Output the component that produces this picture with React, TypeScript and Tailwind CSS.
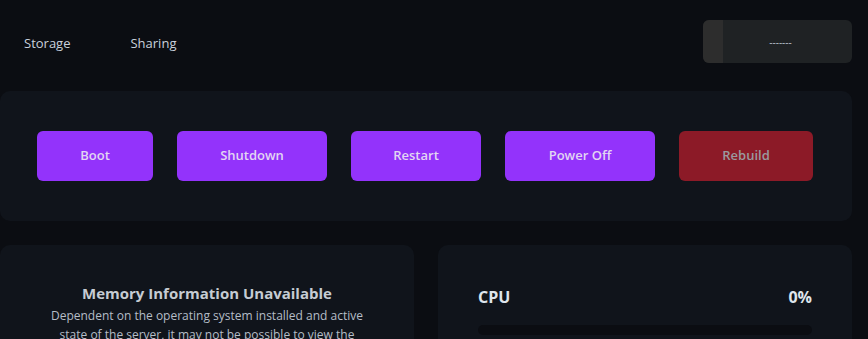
export default function App() {
  const font = { fontFamily: '"Open Sans", "Noto Sans", sans-serif' };
  const buttons = [
    { label: "Boot", w: "w-[116px]" },
    { label: "Shutdown", w: "w-[150px]" },
    { label: "Restart", w: "w-[130px]" },
    { label: "Power Off", w: "w-[150px]" },
  ];

  return (
    <div className="min-h-[339px] w-full overflow-hidden bg-[#0b0d12] pr-4" style={font}>
      {/* header */}
      <header className="flex h-[91px] items-start justify-between">
        <nav className="flex gap-[60px] pl-6 pt-[34px] text-[13px] text-[#c9d1dc]">
          <span>Storage</span>
          <span>Sharing</span>
        </nav>
        <div className="mt-5 flex h-[43px] w-[149px] overflow-hidden rounded-md bg-[#1f2224]">
          <div className="w-5 bg-[#2d2d2d]" />
          <div className="flex flex-1 items-center justify-center pr-[14px] text-[10px] leading-none text-[#b9c3cf]">
            -------
          </div>
        </div>
      </header>

      {/* power actions */}
      <section className="flex justify-center gap-6 rounded-[10px] bg-[#10141b] py-10 pr-[2px]">
        {buttons.map((b) => (
          <button
            key={b.label}
            className={`flex h-[50px] ${b.w} items-center justify-center rounded-md bg-[#9333fb] text-[13px] font-semibold text-[#e2d6f2]`}
          >
            {b.label}
          </button>
        ))}
        <button className="flex h-[50px] w-[134px] items-center justify-center rounded-md bg-[#8c1a27] text-[13px] font-semibold text-[#9a9a9f]">
          Rebuild
        </button>
      </section>

      {/* stats */}
      <div className="mt-6 grid grid-cols-2 gap-6">
        <div className="h-[120px] rounded-[10px] bg-[#10141b] px-10 pt-[38px] text-center">
          <h3 className="text-[15px] font-bold leading-5 text-[#c6ccd3]">Memory Information Unavailable</h3>
          <p className="mt-[3px] text-[12px] leading-[19px] text-[#b5bdc7]">
            Dependent on the operating system installed and active state of the server, it may not be possible to view
            the memory usage at this time.
          </p>
        </div>
        <div className="h-[120px] rounded-[10px] bg-[#10141b] px-10 pt-10">
          <div className="flex items-center justify-between text-[16px] font-bold leading-6 text-[#dfe5ec]">
            <span>CPU</span>
            <span>0%</span>
          </div>
          <div className="mt-[16px] h-[10px] w-full rounded-full bg-[#0b0d12]" />
        </div>
      </div>
    </div>
  );
}
